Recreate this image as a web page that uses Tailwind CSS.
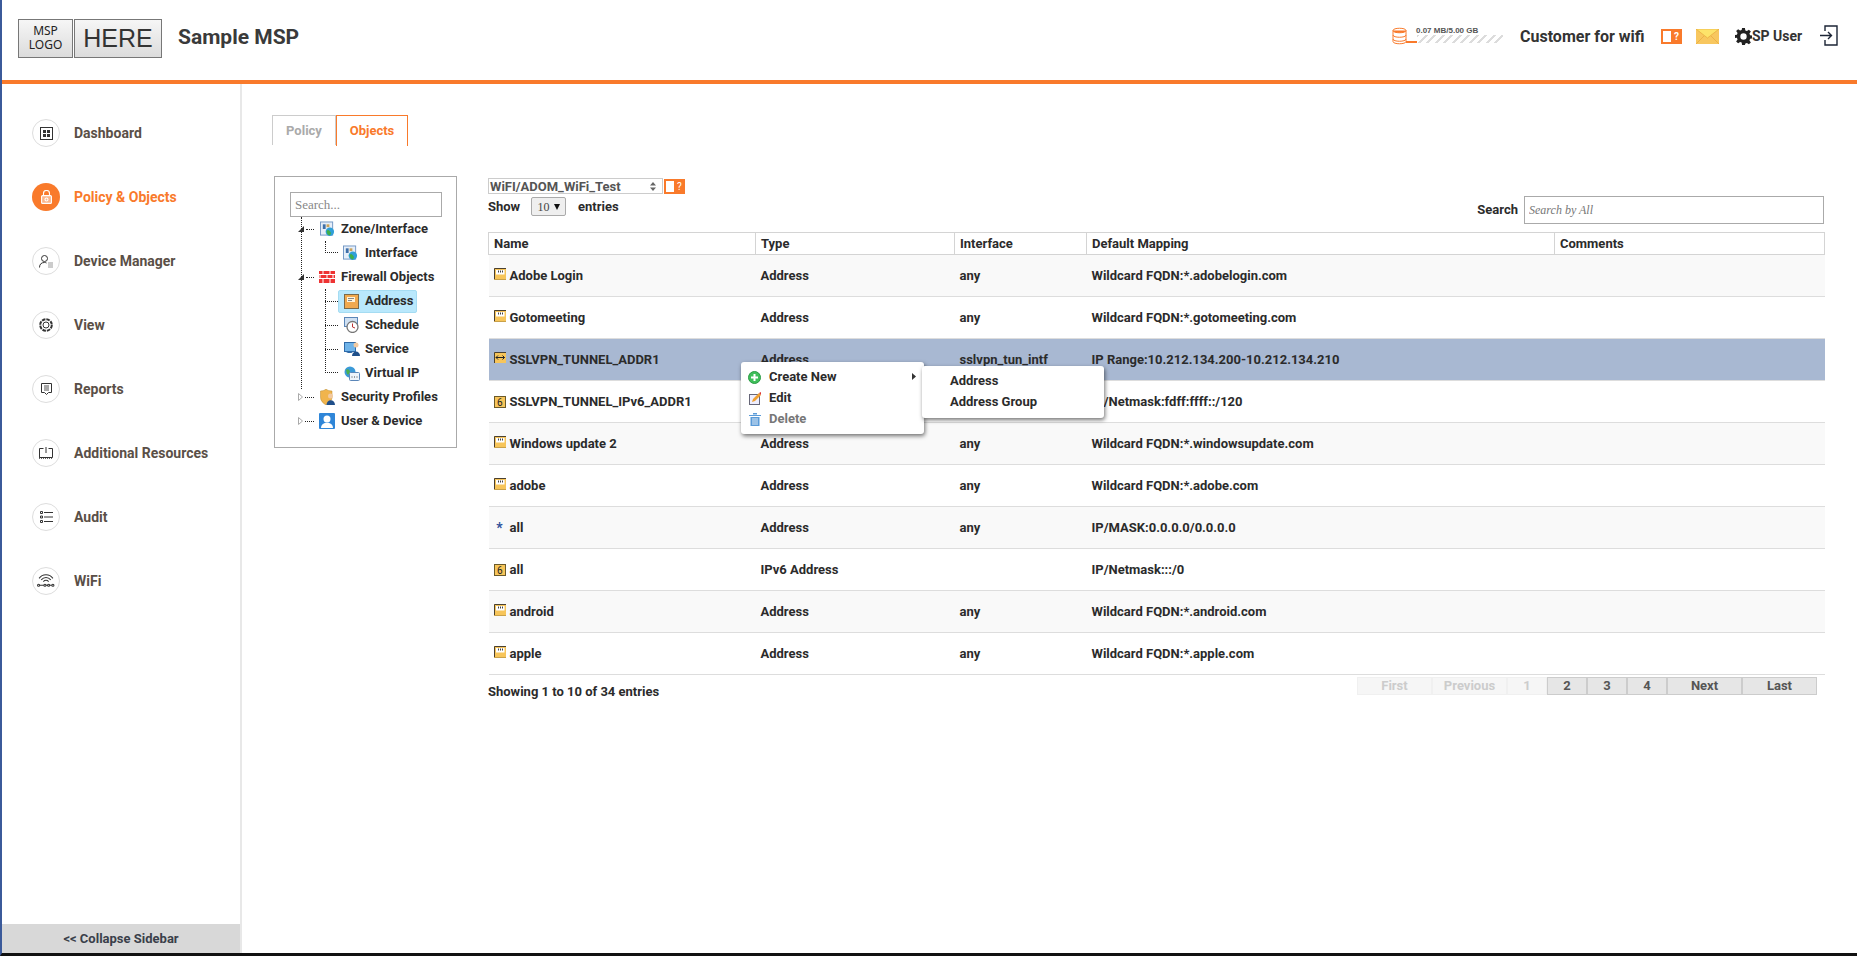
<!DOCTYPE html>
<html lang="en">
  <head>
    <meta charset="UTF-8" />
    <title>Policy &amp; Objects</title>
    <script src="https://cdn.jsdelivr.net/npm/@tailwindcss/browser@4"></script>
  </head>
  <body class="bg-white font-['Roboto',sans-serif] font-bold text-[13px] text-[#2b2b2b] overflow-hidden">
    <!-- icons used more than once -->
    <svg class="hidden">
      <symbol id="addr" viewBox="0 0 12 12">
        <rect x="0" y="0" width="12" height="11" fill="#f7c55a" />
        <path d="M0.500 11V0.500H12" fill="none" stroke="#4a4030" />
        <rect x="2" y="2" width="8.500" height="4.500" fill="#fff" />
        <path d="M4.500 2.500v2M6.500 2.500v2M8.500 2.500v2" stroke="#444" />
        <path d="M0 11.500h12" stroke="#c9a14a" />
      </symbol>
      <symbol id="range" viewBox="0 0 12 12">
        <rect x="0" y="0" width="12" height="11" fill="#f7c55a" />
        <path d="M0.500 11V0.500H12" fill="none" stroke="#4a4030" />
        <path d="M2 5.500h8.500M4 3.500l-2 2 2 2M8.500 3.500l2 2-2 2" fill="none" stroke="#222" />
      </symbol>
      <symbol id="six" viewBox="0 0 12 12">
        <rect x="0.500" y="0.500" width="11" height="11" fill="#f7c55a" stroke="#6b5a2a" />
        <text x="3" y="10" font-size="10" font-weight="400" fill="#222" font-family="Roboto">6</text>
      </symbol>
      <symbol id="globe" viewBox="0 0 16 16">
        <rect x="0.500" y="0.500" width="13" height="14" fill="#e6eef8" stroke="#6f95c4" />
        <rect x="3" y="3" width="3" height="5" fill="#3f6fa8" />
        <rect x="7" y="3" width="3" height="3" fill="#c9a25a" />
        <circle cx="10.500" cy="11" r="4.500" fill="#2f9fd8" />
        <path d="M7 10c2-2 3 0 4 1s1 3-1 4c-2-1-3-3-3-5z" fill="#3fae4a" />
      </symbol>
    </svg>

    <div class="w-[1857px] h-[956px] flex flex-col border-l-2 border-b-[3px] border-l-[#3b5a9a] border-b-[#111] relative">
      <!-- header -->
      <header class="h-[84px] shrink-0 border-b-4 border-[#f97a2b] flex items-center pb-[4px]">
        <div class="flex items-center ml-[16px] font-normal font-['Noto_Sans',sans-serif] text-[#222] gap-[1px]">
          <div class="w-[55px] h-[39px] border border-[#777] bg-gradient-to-b from-[#f6f6f6] to-[#dcdcdc] text-center text-[12px] leading-[14px] pt-[4px]">MSP<br />LOGO</div>
          <div class="w-[88px] h-[39px] border border-[#777] bg-gradient-to-b from-[#f6f6f6] to-[#dcdcdc] text-center text-[25px] leading-[36px] font-['Liberation_Sans',sans-serif] text-[#333]">HERE</div>
        </div>
        <div class="ml-[16px] text-[21px] text-[#3a3a3a]">Sample MSP</div>

        <div class="ml-auto flex items-center h-full pb-[2px]">
          <svg class="w-[15px] h-[18px] mb-[2px]" viewBox="0 0 15 18" fill="#fff" stroke="#f97a2b" stroke-width="1">
            <path d="M1 3.500c0-3 13-3 13 0v11c0 3-13 3-13 0z" />
            <path d="M1 3.500c0 3 13 3 13 0" fill="#f97a2b" />
            <path d="M1 8c0 3 13 3 13 0M1 12c0 3 13 3 13 0" fill="none" />
          </svg>
          <div class="w-[97px] ml-[-1px] relative h-[20px]">
            <div class="absolute left-[10px] top-[-1px] text-[8px] leading-[10px] font-['Liberation_Sans',sans-serif] text-[#555] whitespace-nowrap">0.07 MB/5.00 GB</div>
            <div class="absolute left-0 top-[14px] w-[11px] h-[2px] bg-[#f97a2b]"></div>
            <div class="absolute left-[11px] top-[8px] w-[86px] h-[8px] bg-[repeating-linear-gradient(135deg,#dcdcdc_0,#dcdcdc_2px,#fff_2px,#fff_6px)]"></div>
          </div>
          <div class="ml-[17px] text-[16px] text-[#333] w-[125px] whitespace-nowrap">Customer for wifi</div>
          <svg class="ml-[16px] w-[21px] h-[15px] mb-[2px]" viewBox="0 0 21 15">
            <rect width="21" height="15" fill="#f97a2b" />
            <rect x="2" y="2" width="8" height="11" fill="#fff" />
            <text x="13" y="11" font-size="10" fill="#fff" font-family="Roboto" font-weight="700">?</text>
          </svg>
          <svg class="ml-[14px] w-[23px] h-[15px] mb-[2px]" viewBox="0 0 23 15">
            <rect width="23" height="15" fill="#f8c75f" />
            <path d="M0 0l11.500 9L23 0z" fill="#fde36a" stroke="#e6a93c" stroke-width="0.700" />
            <path d="M0 15l8-8M23 15l-8-8" stroke="#e6a93c" stroke-width="0.700" />
          </svg>
          <svg class="ml-[16px] w-[17px] h-[17px] mb-[2px]" viewBox="0 0 24 24" fill="#222">
            <path fill-rule="evenodd" d="M10 0h4l.6 3.400 2.200.9 2.800-2 2.800 2.800-2 2.800.9 2.200 3.400.6v4l-3.400.6-.9 2.200 2 2.800-2.800 2.800-2.800-2-2.200.9L14 24h-4l-.6-3.400-2.200-.9-2.800 2-2.800-2.800 2-2.800-.9-2.200L-.7 14v-4l3.400-.6.9-2.200-2-2.800 2.800-2.800 2.800 2 2.200-.9zM12 7.500a4.500 4.500 0 1 0 0 9 4.500 4.500 0 0 0 0-9z" />
          </svg>
          <div class="text-[14px] text-[#333] w-[50px] whitespace-nowrap mb-[2px]">SP User</div>
          <svg class="ml-[18px] mr-[19px] w-[18px] h-[21px] mb-[3px]" viewBox="0 0 18 21" fill="none" stroke="#1c2536" stroke-width="1.400">
            <path d="M5 6V1h12v19H5v-5" />
            <path d="M0 10.500h11M8 7l3.500 3.500L8 14" />
          </svg>
        </div>
      </header>

      <div class="flex flex-1 min-h-0">
        <!-- sidebar -->
        <aside class="w-[238px] shrink-0 border-r-2 border-[#e8e8e8] box-content flex flex-col text-[14px] text-[#5a4f47]">
          <nav class="flex-1 pt-[35px] pl-[30px] flex flex-col gap-[36px]">
            <a class="flex items-center h-[28px] gap-[14px]">
              <span class="w-[28px] h-[28px] rounded-full border border-[#ddd] flex items-center justify-center">
                <svg class="w-[13px] h-[13px]" viewBox="0 0 13 13" fill="#333"><path fill-rule="evenodd" d="M0 0h13v13H0zM1 1v11h11V1z" /><path d="M3 3h3v3H3zM7 3h3v3H7zM3 7h3v3H3zM7 7h3v3H7z" /></svg>
              </span>
              Dashboard
            </a>
            <a class="flex items-center h-[28px] gap-[14px] text-[#f97a2b]">
              <span class="w-[28px] h-[28px] rounded-full bg-[#f97a2b] flex items-center justify-center">
                <svg class="w-[11px] h-[14px]" viewBox="0 0 11 14" fill="none" stroke="#fff" stroke-width="1.100"><rect x="0.600" y="5.600" width="9.800" height="7.800" rx="1" fill="#fbb58a" /><path d="M2.500 5.500V3.500a3 3 0 0 1 6 0v2" /><circle cx="5.500" cy="9.500" r="1.500" /></svg>
              </span>
              Policy &amp; Objects
            </a>
            <a class="flex items-center h-[28px] gap-[14px]">
              <span class="w-[28px] h-[28px] rounded-full border border-[#ddd] flex items-center justify-center">
                <svg class="w-[14px] h-[13px]" viewBox="0 0 14 13" fill="none" stroke="#333"><circle cx="5.500" cy="3.500" r="3" /><path d="M0.500 12.500c0-3.500 2-5 5-5 1 0 1.500.2 2 .5" /><path d="M9 8h5M9 10h5M9 12h5" stroke="#999" /></svg>
              </span>
              Device Manager
            </a>
            <a class="flex items-center h-[28px] gap-[14px]">
              <span class="w-[28px] h-[28px] rounded-full border border-[#ddd] flex items-center justify-center">
                <svg class="w-[14px] h-[14px]" viewBox="0 0 14 14" fill="none" stroke="#333"><circle cx="7" cy="7" r="5.800" stroke-width="2" stroke-dasharray="3.500 1" /><circle cx="7" cy="7" r="3" /></svg>
              </span>
              View
            </a>
            <a class="flex items-center h-[28px] gap-[14px]">
              <span class="w-[28px] h-[28px] rounded-full border border-[#ddd] flex items-center justify-center">
                <svg class="w-[11px] h-[12px]" viewBox="0 0 11 12" fill="none" stroke="#333"><path d="M0.500 0.500h10v9h-3l-2 2-2-2h-3z" /><path d="M3 3h5M3 5h5M3 7h5" stroke="#555" /></svg>
              </span>
              Reports
            </a>
            <a class="flex items-center h-[28px] gap-[14px]">
              <span class="w-[28px] h-[28px] rounded-full border border-[#ddd] flex items-center justify-center">
                <svg class="w-[14px] h-[12px]" viewBox="0 0 14 12" fill="none" stroke="#333"><path d="M0.500 1.500h4M9.500 1.500h4M0.500 1.500v9h13v-9M7 0v6" /><path d="M0 11h14" stroke-width="1.600" stroke-dasharray="1 1" /></svg>
              </span>
              Additional Resources
            </a>
            <a class="flex items-center h-[28px] gap-[14px]">
              <span class="w-[28px] h-[28px] rounded-full border border-[#ddd] flex items-center justify-center">
                <svg class="w-[13px] h-[12px]" viewBox="0 0 13 12" fill="none" stroke="#333"><path d="M0.500 0.500h2v2h-2zM0.500 5h2v2h-2zM0.500 9.500h2v2h-2zM4 1.500h9M4 6h9M4 10.500h9" /></svg>
              </span>
              Audit
            </a>
            <a class="flex items-center h-[28px] gap-[14px]">
              <span class="w-[28px] h-[28px] rounded-full border border-[#ddd] flex items-center justify-center">
                <svg class="w-[18px] h-[14px]" viewBox="0 0 17 13" fill="none" stroke="#333" stroke-width="1"><path d="M2 4c3-4.500 10-4.500 13 0M4 5.500c2.500-3 6.500-3 9 0M6 7c1.500-1.500 3.500-1.500 5 0" /><path d="M2.500 10.500h4M8.500 10.500h2M12 10.500h2" /><circle cx="1.500" cy="10.500" r="1" /><circle cx="7.500" cy="10.500" r="1" /><circle cx="11" cy="10.500" r="1" /><circle cx="15" cy="10.500" r="1" /></svg>
              </span>
              WiFi
            </a>
          </nav>
          <div class="h-[29px] bg-[#d8d8d8] text-[13px] text-[#3a3f4a] flex items-center justify-center">&lt;&lt; Collapse Sidebar</div>
        </aside>

        <!-- main -->
        <main class="flex-1 min-w-0 pl-[30px] pt-[31px]">
          <div class="flex h-[31px]">
            <div class="w-[64px] h-[30px] border-t border-l border-r border-[#ccc] text-[#aaa] flex items-center justify-center">Policy</div>
            <div class="w-[72px] h-[31px] border-t border-l border-r border-[#f97a2b] text-[#f97a2b] flex items-center justify-center">Objects</div>
          </div>

          <div class="flex mt-[30px] ml-[2px]">
            <!-- tree -->
            <div class="w-[183px] h-[272px] border border-[#aaa] pl-[15px] pt-[15px] relative shrink-0">
              <input class="block w-[152px] h-[25px] border border-[#aaa] px-[4px] font-['Liberation_Serif',serif] font-normal text-[13px] placeholder:text-[#888]" placeholder="Search..." />
              <!-- connector lines -->
              <div class="absolute left-[26px] top-[40px] h-[172px] border-l border-dotted border-[#222]"></div>
              <div class="absolute left-[50px] top-[64px] h-[12px] w-[13px] border-l border-b border-dotted border-[#222]"></div>
              <div class="absolute left-[50px] top-[112px] h-[84px] w-[13px] border-l border-b border-dotted border-[#222]"></div>
              <div class="absolute left-[50px] top-[124px] w-[13px] border-b border-dotted border-[#222]"></div>
              <div class="absolute left-[50px] top-[148px] w-[13px] border-b border-dotted border-[#222]"></div>
              <div class="absolute left-[50px] top-[172px] w-[13px] border-b border-dotted border-[#222]"></div>

              <div class="flex flex-col ml-[8px]">
                <div class="h-[24px] flex items-center relative">
                  <svg class="w-[6px] h-[6px]" viewBox="0 0 6 6"><path d="M6 0v6H0z" fill="#333" /></svg>
                  <span class="w-[8px] ml-[2px] border-b border-dotted border-[#222]"></span>
                  <svg class="w-[15px] h-[16px] ml-[6px]"><use href="#globe" /></svg>
                  <span class="ml-[6px]">Zone/Interface</span>
                </div>
                <div class="h-[24px] flex items-center pl-[39px]">
                  <svg class="w-[15px] h-[16px] ml-[6px]"><use href="#globe" /></svg>
                  <span class="ml-[7px]">Interface</span>
                </div>
                <div class="h-[24px] flex items-center">
                  <svg class="w-[6px] h-[6px]" viewBox="0 0 6 6"><path d="M6 0v6H0z" fill="#333" /></svg>
                  <span class="w-[8px] ml-[2px] border-b border-dotted border-[#222]"></span>
                  <svg class="w-[16px] h-[12px] ml-[5px]" viewBox="0 0 16 12">
                    <rect width="16" height="12" fill="#e33" />
                    <path d="M0 3.500h16M0 7.500h16M4 0v3.500M11 0v3.500M1 3.500v4M8 3.500v4M14 3.500v4M4 7.500v4.500M11 7.500v4.500" stroke="#fff" />
                  </svg>
                  <span class="ml-[6px]">Firewall Objects</span>
                </div>
                <div class="h-[24px] flex items-center pl-[40px]">
                  <div class="h-[23px] w-[79px] bg-[#b9e8fc] border border-[#a5dcf2] rounded-[2px] flex items-center pl-[5px]">
                    <svg class="w-[15px] h-[15px]" viewBox="0 0 15 15">
                      <rect x="0.500" y="0.500" width="14" height="14" fill="#f0a94e" stroke="#7a6a4a" />
                      <rect x="3" y="3" width="8" height="5" fill="#fff3d8" />
                      <path d="M4 4.500h6M4 6.500h4" stroke="#888" />
                    </svg>
                    <span class="ml-[6px]">Address</span>
                  </div>
                </div>
                <div class="h-[24px] flex items-center pl-[46px]">
                  <svg class="w-[15px] h-[16px]" viewBox="0 0 15 16" fill="none">
                    <rect x="0.500" y="0.500" width="13" height="9" fill="#cfe0f2" stroke="#5b86b8" />
                    <circle cx="8.500" cy="10" r="5.500" fill="#fff" stroke="#777" stroke-width="1.300" />
                    <path d="M8.500 6.500V10l2.500 1" stroke="#b33" />
                  </svg>
                  <span class="ml-[6px]">Schedule</span>
                </div>
                <div class="h-[24px] flex items-center pl-[46px]">
                  <svg class="w-[16px] h-[16px]" viewBox="0 0 16 16">
                    <rect x="0.500" y="1.500" width="11" height="9" fill="#6fb3e8" stroke="#2f6aa8" />
                    <path d="M2 12l4-2 3 2z" fill="#2f6aa8" />
                    <circle cx="12" cy="4" r="2.500" fill="#f1c9a0" />
                    <path d="M8 15c0-6 8-6 8 0z" fill="#1f4f8a" />
                  </svg>
                  <span class="ml-[5px]">Service</span>
                </div>
                <div class="h-[24px] flex items-center pl-[46px]">
                  <svg class="w-[16px] h-[15px]" viewBox="0 0 16 15">
                    <circle cx="6" cy="6" r="5.500" fill="#3b9ad8" />
                    <path d="M2 4c2-2 4 0 4 2s-2 3-3 2z" fill="#4ab04f" />
                    <rect x="5.500" y="6.500" width="10" height="8" rx="1" fill="#eef4fb" stroke="#5b86b8" />
                    <path d="M7.500 11h1M10 11h1M12.500 11h1" stroke="#444" />
                  </svg>
                  <span class="ml-[5px]">Virtual IP</span>
                </div>
                <div class="h-[24px] flex items-center">
                  <svg class="w-[5px] h-[8px]" viewBox="0 0 5 8"><path d="M0.500 0.500l4 3.500-4 3.500z" fill="#fff" stroke="#aaa" /></svg>
                  <span class="w-[9px] ml-[2px] border-b border-dotted border-[#222]"></span>
                  <svg class="w-[15px] h-[16px] ml-[6px]" viewBox="0 0 15 16">
                    <path d="M0.500 2C3 2 5 1 6 0c1 1 3 2 6 2v6c0 4-3 6-6 8-3-2-5.500-4-5.500-8z" fill="#f0b44c" stroke="#b98a2e" stroke-width="0.500" />
                    <circle cx="10.500" cy="7" r="2.500" fill="#f1c9a0" />
                    <path d="M6.500 16c0-6.500 8.500-6.500 8.500 0z" fill="#1f4f8a" />
                  </svg>
                  <span class="ml-[6px]">Security Profiles</span>
                </div>
                <div class="h-[24px] flex items-center">
                  <svg class="w-[5px] h-[8px]" viewBox="0 0 5 8"><path d="M0.500 0.500l4 3.500-4 3.500z" fill="#fff" stroke="#aaa" /></svg>
                  <span class="w-[9px] ml-[2px] border-b border-dotted border-[#222]"></span>
                  <svg class="w-[16px] h-[16px] ml-[5px]" viewBox="0 0 16 16">
                    <rect width="16" height="16" rx="1" fill="#2f86d8" />
                    <circle cx="8" cy="6" r="3.500" fill="#fff" />
                    <path d="M2 15c0-7 12-7 12 0z" fill="#fff" />
                  </svg>
                  <span class="ml-[6px]">User &amp; Device</span>
                </div>
              </div>
            </div>

            <!-- table side -->
            <div class="w-[1336px] ml-[31px] pt-[2px]">
              <div class="flex justify-between items-end h-[46px]">
                <div>
                  <div class="flex items-center h-[16px]">
                    <div class="w-[175px] h-[16px] border border-[#ccc] flex items-center justify-between pl-[1px] pr-[6px] text-[#555] leading-none">
                      WiFI/ADOM_WiFi_Test
                      <svg class="w-[6px] h-[9px]" viewBox="0 0 6 9" fill="#666"><path d="M3 0l3 3.500H0zM3 9L0 5.500h6z" /></svg>
                    </div>
                    <svg class="ml-[1px] w-[21px] h-[15px]" viewBox="0 0 21 15">
                      <rect width="21" height="15" fill="#f97a2b" />
                      <rect x="2" y="2" width="8" height="11" fill="#fff" />
                      <text x="13" y="11" font-size="10" fill="#fff" font-family="Roboto" font-weight="400">?</text>
                    </svg>
                  </div>
                  <div class="flex items-center mt-[3px] h-[19px] mb-[8px]">
                    <span class="w-[43px]">Show</span>
                    <div class="w-[35px] h-[19px] border border-[#aaa] rounded-[2px] bg-[#efefef] flex items-center justify-center gap-[4px] font-['Liberation_Serif',serif] font-normal text-[12px] text-[#444]">
                      10
                      <svg class="w-[6px] h-[6px]" viewBox="0 0 6 6" fill="#111"><path d="M0 0h6L3 6z" /></svg>
                    </div>
                    <span class="ml-[12px]">entries</span>
                  </div>
                </div>
                <div class="flex items-center gap-[6px]">
                  <span>Search</span>
                  <input class="w-[300px] h-[28px] border border-[#aaa] px-[4px] font-['Liberation_Serif',serif] font-normal italic text-[12px] placeholder:text-[#777]" placeholder="Search by All" />
                </div>
              </div>

              <table class="w-[1336px] table-fixed border-collapse mt-[8px]">
                <colgroup>
                  <col class="w-[267px]" /><col class="w-[199px]" /><col class="w-[132px]" /><col class="w-[468px]" /><col class="w-[270px]" />
                </colgroup>
                <thead class="text-left">
                  <tr class="h-[22px]">
                    <th class="border border-[#d4d4d4] pl-[5px] font-bold">Name</th>
                    <th class="border border-[#d4d4d4] pl-[5px] font-bold">Type</th>
                    <th class="border border-[#d4d4d4] pl-[5px] font-bold">Interface</th>
                    <th class="border border-[#d4d4d4] pl-[5px] font-bold">Default Mapping</th>
                    <th class="border border-[#d4d4d4] pl-[5px] font-bold">Comments</th>
                  </tr>
                </thead>
                <tbody>
                  <tr class="h-[42px] bg-[#f9f9f9] border-b border-[#ddd]">
                    <td class="pl-[5px]"><span class="flex items-center gap-[4px]"><svg class="w-[12px] h-[12px] mb-[3px]"><use href="#addr" /></svg>Adobe Login</span></td>
                    <td class="pl-[5px]">Address</td><td class="pl-[5px]">any</td><td class="pl-[5px]">Wildcard FQDN:*.adobelogin.com</td><td></td>
                  </tr>
                  <tr class="h-[42px] border-b border-[#ddd]">
                    <td class="pl-[5px]"><span class="flex items-center gap-[4px]"><svg class="w-[12px] h-[12px] mb-[3px]"><use href="#addr" /></svg>Gotomeeting</span></td>
                    <td class="pl-[5px]">Address</td><td class="pl-[5px]">any</td><td class="pl-[5px]">Wildcard FQDN:*.gotomeeting.com</td><td></td>
                  </tr>
                  <tr class="h-[42px] bg-[#a8b8d2] border-b border-[#ddd]">
                    <td class="pl-[5px]"><span class="flex items-center gap-[4px]"><svg class="w-[12px] h-[12px] mb-[3px]"><use href="#range" /></svg>SSLVPN_TUNNEL_ADDR1</span></td>
                    <td class="pl-[5px]">Address</td><td class="pl-[5px]">sslvpn_tun_intf</td><td class="pl-[5px]">IP Range:10.212.134.200-10.212.134.210</td><td></td>
                  </tr>
                  <tr class="h-[42px] border-b border-[#ddd]">
                    <td class="pl-[5px]"><span class="flex items-center gap-[4px]"><svg class="w-[12px] h-[12px]"><use href="#six" /></svg>SSLVPN_TUNNEL_IPv6_ADDR1</span></td>
                    <td class="pl-[5px]"></td><td class="pl-[5px]"></td><td class="pl-[5px]">IP/Netmask:fdff:ffff::/120</td><td></td>
                  </tr>
                  <tr class="h-[42px] bg-[#f9f9f9] border-b border-[#ddd]">
                    <td class="pl-[5px]"><span class="flex items-center gap-[4px]"><svg class="w-[12px] h-[12px] mb-[3px]"><use href="#addr" /></svg>Windows update 2</span></td>
                    <td class="pl-[5px]">Address</td><td class="pl-[5px]">any</td><td class="pl-[5px]">Wildcard FQDN:*.windowsupdate.com</td><td></td>
                  </tr>
                  <tr class="h-[42px] border-b border-[#ddd]">
                    <td class="pl-[5px]"><span class="flex items-center gap-[4px]"><svg class="w-[12px] h-[12px] mb-[3px]"><use href="#addr" /></svg>adobe</span></td>
                    <td class="pl-[5px]">Address</td><td class="pl-[5px]">any</td><td class="pl-[5px]">Wildcard FQDN:*.adobe.com</td><td></td>
                  </tr>
                  <tr class="h-[42px] bg-[#f9f9f9] border-b border-[#ddd]">
                    <td class="pl-[5px]"><span class="flex items-center gap-[4px]"><span class="w-[12px] text-center text-[#2f4f9a] text-[14px] leading-[14px]">*</span>all</span></td>
                    <td class="pl-[5px]">Address</td><td class="pl-[5px]">any</td><td class="pl-[5px]">IP/MASK:0.0.0.0/0.0.0.0</td><td></td>
                  </tr>
                  <tr class="h-[42px] border-b border-[#ddd]">
                    <td class="pl-[5px]"><span class="flex items-center gap-[4px]"><svg class="w-[12px] h-[12px]"><use href="#six" /></svg>all</span></td>
                    <td class="pl-[5px]">IPv6 Address</td><td class="pl-[5px]"></td><td class="pl-[5px]">IP/Netmask:::/0</td><td></td>
                  </tr>
                  <tr class="h-[42px] bg-[#f9f9f9] border-b border-[#ddd]">
                    <td class="pl-[5px]"><span class="flex items-center gap-[4px]"><svg class="w-[12px] h-[12px] mb-[3px]"><use href="#addr" /></svg>android</span></td>
                    <td class="pl-[5px]">Address</td><td class="pl-[5px]">any</td><td class="pl-[5px]">Wildcard FQDN:*.android.com</td><td></td>
                  </tr>
                  <tr class="h-[42px] border-b border-[#ddd]">
                    <td class="pl-[5px]"><span class="flex items-center gap-[4px]"><svg class="w-[12px] h-[12px] mb-[3px]"><use href="#addr" /></svg>apple</span></td>
                    <td class="pl-[5px]">Address</td><td class="pl-[5px]">any</td><td class="pl-[5px]">Wildcard FQDN:*.apple.com</td><td></td>
                  </tr>
                </tbody>
              </table>

              <div class="flex justify-between mt-[2px] pr-[7px]">
                <span class="mt-[5px]">Showing 1 to 10 of 34 entries</span>
                <div class="flex h-[18px] text-[13px] leading-[16px] text-center">
                  <span class="w-[75px] border border-[#f0f0f0] bg-[#f6f6f6] text-[#ccc]">First</span>
                  <span class="w-[75px] border border-[#f0f0f0] bg-[#f6f6f6] text-[#ccc]">Previous</span>
                  <span class="w-[40px] border border-[#f0f0f0] bg-[#f6f6f6] text-[#ccc]">1</span>
                  <span class="w-[40px] border border-[#ccc] bg-[#e6e6e6] text-[#555]">2</span>
                  <span class="w-[40px] border border-[#ccc] bg-[#e6e6e6] text-[#555]">3</span>
                  <span class="w-[40px] border border-[#ccc] bg-[#e6e6e6] text-[#555]">4</span>
                  <span class="w-[75px] border border-[#ccc] bg-[#e6e6e6] text-[#555]">Next</span>
                  <span class="w-[75px] border border-[#ccc] bg-[#e6e6e6] text-[#555]">Last</span>
                </div>
              </div>
            </div>
          </div>
        </main>
      </div>

      <!-- context menu, sits over the table -->
      <div class="absolute left-[739px] top-[362px] w-[183px] h-[72px] bg-white rounded-[3px] shadow-[1px_2px_4px_rgba(0,0,0,0.55)] pt-[4px]">
        <div class="h-[21px] flex items-center pl-[7px] relative">
          <svg class="w-[13px] h-[13px] mt-[2px]" viewBox="0 0 13 13"><circle cx="6.500" cy="6.500" r="6" fill="#3fbf5a" stroke="#2a9a44" /><path d="M6.500 3v7M3 6.500h7" stroke="#fff" stroke-width="2" /></svg>
          <span class="ml-[8px]">Create New</span>
          <svg class="absolute right-[8px] top-[7px] w-[4px] h-[7px]" viewBox="0 0 4 7" fill="#333"><path d="M0 0l4 3.500L0 7z" /></svg>
        </div>
        <div class="h-[21px] flex items-center pl-[8px]">
          <svg class="w-[12px] h-[13px] mt-[2px]" viewBox="0 0 12 13"><rect x="0.500" y="2.500" width="10" height="10" fill="#eef" stroke="#667" /><path d="M3 10l1-3 6-6 2 2-6 6z" fill="#f0a030" /><path d="M10 1l2 2 0-3z" fill="#d33" /></svg>
          <span class="ml-[8px]">Edit</span>
        </div>
        <div class="h-[21px] flex items-center pl-[8px] text-[#777]">
          <svg class="w-[12px] h-[13px] mt-[2px]" viewBox="0 0 12 13" fill="#5b9bd8"><path d="M0 2h12v1H0zM4 0h4v1.500H4zM1.500 4h9v9h-9z" /><path d="M4 5v7M6 5v7M8 5v7" stroke="#fff" stroke-width="0.800" /></svg>
          <span class="ml-[8px]">Delete</span>
        </div>
      </div>
      <div class="absolute left-[920px] top-[366px] w-[182px] h-[52px] bg-white rounded-[3px] shadow-[1px_2px_4px_rgba(0,0,0,0.55)] pt-[4px] pl-[28px]">
        <div class="h-[21px] flex items-center">Address</div>
        <div class="h-[21px] flex items-center">Address Group</div>
      </div>
    </div>
  </body>
</html>
